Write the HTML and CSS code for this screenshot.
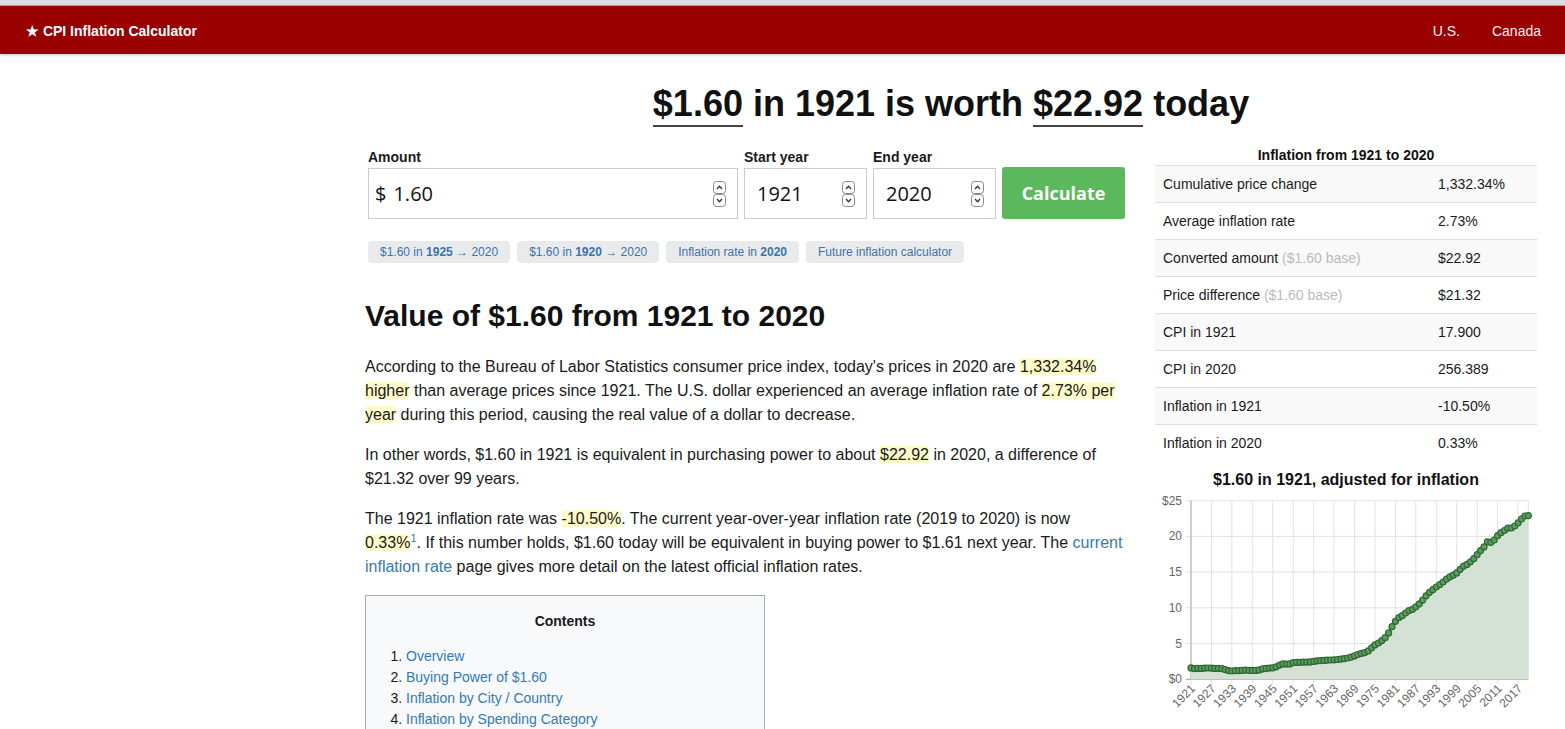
FILE: index.html
```html
<!DOCTYPE html>
<html lang="en">
<head>
    <meta charset="UTF-8">
    <meta name="viewport" content="width=device-width, initial-scale=1.0">
    <title>$1.60 in 1921 is worth $22.92 today | CPI Inflation Calculator</title>
    <link rel="stylesheet" href="styles.css">
</head>
<body>
    <div class="chrome"></div>
    <header class="topbar">
        <a class="brand" href="#">★ CPI Inflation Calculator</a>
        <nav class="topnav">
            <a href="#">U.S.</a>
            <a href="#">Canada</a>
        </nav>
    </header>

    <div class="page">
        <h1 class="headline"><span class="amt">$1.60</span> in 1921 is worth <span class="amt">$22.92</span> today</h1>

        <div class="columns">
            <main class="content">
                <form class="calc" onsubmit="return false">
                    <div class="field field-amount">
                        <label for="amount">Amount</label>
                        <div class="box">
                            <span class="prefix">$</span>
                            <input type="text" id="amount" value="1.60">
                            <svg class="spin" width="13" height="26" viewBox="0 0 13 26">
                                <rect x="0.5" y="0.5" width="12" height="12" rx="3" fill="#fff" stroke="#888"/>
                                <rect x="0.5" y="13.5" width="12" height="12" rx="3" fill="#fff" stroke="#888"/>
                                <path d="M4 8 L6.5 5.2 L9 8" fill="none" stroke="#333" stroke-width="1.3"/>
                                <path d="M4 18 L6.5 20.8 L9 18" fill="none" stroke="#333" stroke-width="1.3"/>
                            </svg>
                        </div>
                    </div>
                    <div class="field field-year">
                        <label for="start">Start year</label>
                        <div class="box">
                            <input type="text" id="start" value="1921">
                            <svg class="spin" width="13" height="26" viewBox="0 0 13 26">
                                <rect x="0.5" y="0.5" width="12" height="12" rx="3" fill="#fff" stroke="#888"/>
                                <rect x="0.5" y="13.5" width="12" height="12" rx="3" fill="#fff" stroke="#888"/>
                                <path d="M4 8 L6.5 5.2 L9 8" fill="none" stroke="#333" stroke-width="1.3"/>
                                <path d="M4 18 L6.5 20.8 L9 18" fill="none" stroke="#333" stroke-width="1.3"/>
                            </svg>
                        </div>
                    </div>
                    <div class="field field-year">
                        <label for="end">End year</label>
                        <div class="box">
                            <input type="text" id="end" value="2020">
                            <svg class="spin" width="13" height="26" viewBox="0 0 13 26">
                                <rect x="0.5" y="0.5" width="12" height="12" rx="3" fill="#fff" stroke="#888"/>
                                <rect x="0.5" y="13.5" width="12" height="12" rx="3" fill="#fff" stroke="#888"/>
                                <path d="M4 8 L6.5 5.2 L9 8" fill="none" stroke="#333" stroke-width="1.3"/>
                                <path d="M4 18 L6.5 20.8 L9 18" fill="none" stroke="#333" stroke-width="1.3"/>
                            </svg>
                        </div>
                    </div>
                    <button class="calc-btn" type="submit">Calculate</button>
                </form>

                <div class="pills">
                    <a class="pill" href="#">$1.60 in <b>1925</b> → 2020</a>
                    <a class="pill" href="#">$1.60 in <b>1920</b> → 2020</a>
                    <a class="pill" href="#">Inflation rate in <b>2020</b></a>
                    <a class="pill" href="#">Future inflation calculator</a>
                </div>

                <h2>Value of $1.60 from 1921 to 2020</h2>

                <p>According to the Bureau of Labor Statistics consumer price index, today's prices in 2020 are <span class="hl">1,332.34% higher</span> than average prices since 1921. The U.S. dollar experienced an average inflation rate of <span class="hl">2.73% per year</span> during this period, causing the real value of a dollar to decrease.</p>

                <p>In other words, $1.60 in 1921 is equivalent in purchasing power to about <span class="hl">$22.92</span> in 2020, a difference of $21.32 over 99 years.</p>

                <p>The 1921 inflation rate was <span class="hl">-10.50%</span>. The current year-over-year inflation rate (2019 to 2020) is now <span class="hl">0.33%</span><sup><a href="#">1</a></sup>. If this number holds, $1.60 today will be equivalent in buying power to $1.61 next year. The <a href="#">current inflation rate</a> page gives more detail on the latest official inflation rates.</p>

                <div class="toc">
                    <div class="toc-title">Contents</div>
                    <ol>
                        <li><a href="#">Overview</a></li>
                        <li><a href="#">Buying Power of $1.60</a></li>
                        <li><a href="#">Inflation by City / Country</a></li>
                        <li><a href="#">Inflation by Spending Category</a></li>
                    </ol>
                </div>
            </main>

            <aside class="sidebar">
                <table class="stats">
                    <caption>Inflation from 1921 to 2020</caption>
                    <tr><td>Cumulative price change</td><td class="val">1,332.34%</td></tr>
                    <tr><td>Average inflation rate</td><td class="val">2.73%</td></tr>
                    <tr><td>Converted amount <span class="muted">($1.60 base)</span></td><td class="val">$22.92</td></tr>
                    <tr><td>Price difference <span class="muted">($1.60 base)</span></td><td class="val">$21.32</td></tr>
                    <tr><td>CPI in 1921</td><td class="val">17.900</td></tr>
                    <tr><td>CPI in 2020</td><td class="val">256.389</td></tr>
                    <tr><td>Inflation in 1921</td><td class="val">-10.50%</td></tr>
                    <tr><td>Inflation in 2020</td><td class="val">0.33%</td></tr>
                </table>

                <h3 class="chart-title">$1.60 in 1921, adjusted for inflation</h3>
                <svg id="chart" class="chart" width="382" height="239"></svg>
            </aside>
        </div>
    </div>

    <script>
        // annual average CPI-U, 1921 to 2020
        const cpi = [17.9,16.8,17.1,17.1,17.5,17.7,17.4,17.1,17.1,16.7,
            15.2,13.7,13.0,13.4,13.7,13.9,14.4,14.1,13.9,14.0,
            14.7,16.3,17.3,17.6,18.0,19.5,22.3,24.1,23.8,24.1,
            26.0,26.5,26.7,26.9,26.8,27.2,28.1,28.9,29.1,29.6,
            29.9,30.2,30.6,31.0,31.5,32.4,33.4,34.8,36.7,38.8,
            40.5,41.8,44.4,49.3,53.8,56.9,60.6,65.2,72.6,82.4,
            90.9,96.5,99.6,103.9,107.6,109.6,113.6,118.3,124.0,130.7,
            136.2,140.3,144.5,148.2,152.4,156.9,160.5,163.0,166.6,172.2,
            177.1,179.9,184.0,188.9,195.3,201.6,207.3,215.3,214.5,218.1,
            224.9,229.6,233.0,236.7,237.0,240.0,245.1,251.1,255.7,256.389];

        const x = yr => 36 + (yr - 1921) * 3.407;
        const y = v => 189.3 - v * 7.144;
        let out = '';

        for (let v = 0; v <= 25; v += 5) {
            out += `<line class="grid" x1="31" x2="${x(2020)}" y1="${y(v)}" y2="${y(v)}"/>`;
            const label = (v === 0 || v === 25) ? '$' + v : v;
            out += `<text class="ylab" x="27" y="${y(v) + 4}">${label}</text>`;
        }
        for (let yr = 1921; yr <= 2020; yr += 6) {
            out += `<line class="grid" x1="${x(yr)}" x2="${x(yr)}" y1="${y(25)}" y2="${y(0) + 5}"/>`;
            out += `<text class="xlab" transform="translate(${x(yr) + 5},${y(0) + 10}) rotate(-45)">${yr}</text>`;
        }
        out += `<line class="grid" x1="${x(2020)}" x2="${x(2020)}" y1="${y(25)}" y2="${y(0)}"/>`;
        out += `<line class="axis" x1="${x(1921)}" x2="${x(1921)}" y1="${y(25)}" y2="${y(0)}"/>`;
        out += `<line class="axis" x1="31" x2="${x(2020)}" y1="${y(0)}" y2="${y(0)}"/>`;

        const pts = cpi.map((c, i) => [x(1921 + i), y(1.6 * c / 17.9)]);
        const line = pts.map(p => p[0].toFixed(1) + ',' + p[1].toFixed(1)).join(' ');
        out += `<polygon class="area" points="${line} ${x(2020)},${y(0)} ${x(1921)},${y(0)}"/>`;
        out += `<polyline class="line" points="${line}"/>`;
        pts.forEach(p => {
            out += `<circle class="dot" cx="${p[0].toFixed(1)}" cy="${p[1].toFixed(1)}" r="3"/>`;
        });

        document.getElementById('chart').innerHTML = out;
    </script>
</body>
</html>
```

FILE: styles.css
```css
body {
    font-family: "Liberation Sans", Arial, sans-serif;
    margin: 0;
    color: #1a1a1a;
    background-color: #fff;
    font-size: 14px;
    line-height: 20px;
}
a {
    color: #337ab7;
    text-decoration: none;
}
.chrome {
    height: 5px;
    background-color: #dcdcdc;
    border-bottom: 1px solid #aaa;
}
.topbar {
    background-color: #990000;
    height: 48px;
    display: flex;
    justify-content: space-between;
    align-items: center;
    padding: 1px 24px 0 26px;
    box-sizing: border-box;
    box-shadow: 0 1px 3px rgba(0,0,0,0.25);
}
.brand {
    color: #fff;
    font-weight: bold;
    font-size: 14px;
}
.topnav {
    display: flex;
    gap: 32px;
}
.topnav a {
    color: #f2f2f2;
    font-size: 14px;
}
.page {
    margin: 0 28px 0 365px;
}
.headline {
    font-size: 36px;
    line-height: 40px;
    text-align: center;
    color: #111;
    margin: 30px 0 21px;
}
.amt {
    border-bottom: 2px solid #444;
    padding-bottom: 1px;
}
.columns {
    display: flex;
    gap: 30px;
}
.content {
    width: 760px;
    flex: none;
}
.sidebar {
    flex: 1;
}

/* calculator form */
.calc {
    display: flex;
    align-items: flex-end;
    gap: 6px;
    padding: 2px 0 0 3px;
}
.field label {
    display: block;
    font-weight: bold;
    font-size: 14px;
    line-height: 20px;
    margin-bottom: 1px;
}
.field-amount {
    width: 370px;
}
.field-year {
    width: 123px;
}
.box {
    display: flex;
    align-items: center;
    height: 51px;
    box-sizing: border-box;
    border: 1px solid #ccc;
    padding: 0 11px 0 12px;
    background: #fff;
}
.field-amount .box {
    padding-left: 6px;
}
.prefix {
    font-family: "Open Sans", sans-serif;
    font-size: 20px;
    margin-right: 7px;
    color: #111;
}
.box input {
    flex: 1;
    min-width: 0;
    border: none;
    outline: none;
    font-family: "Open Sans", sans-serif;
    font-size: 20px;
    color: #111;
    padding: 0;
    background: transparent;
}
.spin {
    flex: none;
}
.calc-btn {
    width: 123px;
    height: 52px;
    background-color: #5cb85c;
    color: #fff;
    border: none;
    border-radius: 3px;
    font-family: "Open Sans", sans-serif;
    font-weight: bold;
    font-size: 18px;
    cursor: pointer;
}
.pills {
    display: flex;
    gap: 7px;
    margin-top: 22px;
    padding-left: 3px;
}
.pill {
    background-color: #e9eaec;
    border-radius: 4px;
    padding: 3px 12px;
    font-size: 12px;
    line-height: 16px;
    color: #3a74b0;
}

/* article */
h2 {
    font-size: 30px;
    line-height: 33px;
    color: #111;
    margin: 36px 0 23px;
}
p {
    font-size: 16px;
    line-height: 24px;
    margin: 0 0 16px;
}
.hl {
    background-color: #fffbc8;
}
sup {
    line-height: 0;
    font-size: 11px;
}
.toc {
    width: 398px;
    border: 1px solid #aaa;
    background-color: #f8f9fa;
    padding: 15px 0 10px;
}
.toc-title {
    text-align: center;
    font-weight: bold;
    margin-bottom: 15px;
}
.toc ol {
    margin: 0;
    padding-left: 40px;
    line-height: 21px;
}

/* sidebar */
.stats {
    width: 100%;
    border-collapse: collapse;
    font-size: 14px;
}
.stats caption {
    font-weight: bold;
    line-height: 20px;
    color: #111;
}
.stats td {
    padding: 8px;
    border-top: 1px solid #ddd;
    line-height: 20px;
}
.stats tr:nth-child(odd) td {
    background-color: #f9f9f9;
}
.stats .val {
    width: 91px;
}
.muted {
    color: #bbb;
}
.chart-title {
    text-align: center;
    font-size: 16px;
    line-height: 20px;
    margin: 9px 0 0;
    color: #111;
}
.chart {
    display: block;
    overflow: visible;
}
.chart .grid {
    stroke: #e2e2e2;
    stroke-width: 1;
}
.chart .axis {
    stroke: #aaa;
    stroke-width: 1;
}
.chart .ylab {
    font-size: 12px;
    fill: #666;
    text-anchor: end;
}
.chart .xlab {
    font-size: 12px;
    fill: #666;
    text-anchor: end;
}
.chart .area {
    fill: #d4e2d5;
}
.chart .line {
    fill: none;
    stroke: #2c6b31;
    stroke-width: 2;
}
.chart .dot {
    fill: #5f9a63;
    stroke: #2c6b31;
    stroke-width: 1.2;
}
```
